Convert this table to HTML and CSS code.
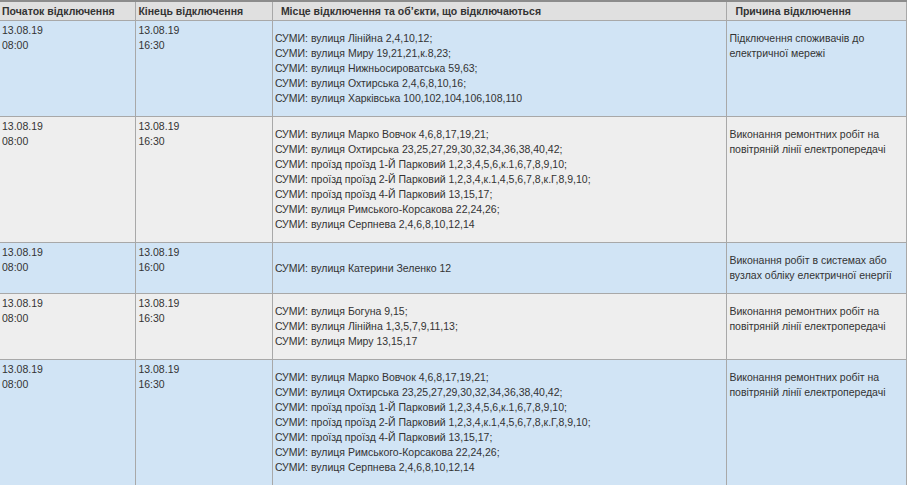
FILE: index.html
```html
<!DOCTYPE html>
<html lang="uk">
<head>
  <meta charset="UTF-8" />
  <title>Графік відключень</title>
  <link rel="stylesheet" href="styles.css">
</head>
<body>

  <table class="outages">
    <thead>
      <tr>
        <th class="col-date">Початок відключення</th>
        <th class="col-date">Кінець відключення</th>
        <th class="col-place wide">Місце відключення та об’єкти, що відключаються</th>
        <th class="col-reason wide">Причина відключення</th>
      </tr>
    </thead>
    <tbody>
      <tr class="odd">
        <td class="date">13.08.19<br>08:00</td>
        <td class="date">13.08.19<br>16:30</td>
        <td class="place">СУМИ: вулиця Лінійна 2,4,10,12;<br>СУМИ: вулиця Миру 19,21,21,к.8,23;<br>СУМИ: вулиця Нижньосироватська 59,63;<br>СУМИ: вулиця Охтирська 2,4,6,8,10,16;<br>СУМИ: вулиця Харківська 100,102,104,106,108,110</td>
        <td class="reason">Підключення споживачів до електричної мережі</td>
      </tr>
      <tr class="even">
        <td class="date">13.08.19<br>08:00</td>
        <td class="date">13.08.19<br>16:30</td>
        <td class="place">СУМИ: вулиця Марко Вовчок 4,6,8,17,19,21;<br>СУМИ: вулиця Охтирська 23,25,27,29,30,32,34,36,38,40,42;<br>СУМИ: проїзд проїзд 1-Й Парковий 1,2,3,4,5,6,к.1,6,7,8,9,10;<br>СУМИ: проїзд проїзд 2-Й Парковий 1,2,3,4,к.1,4,5,6,7,8,к.Г,8,9,10;<br>СУМИ: проїзд проїзд 4-Й Парковий 13,15,17;<br>СУМИ: вулиця Римського-Корсакова 22,24,26;<br>СУМИ: вулиця Серпнева 2,4,6,8,10,12,14</td>
        <td class="reason">Виконання ремонтних робіт на повітряній лінії електропередачі</td>
      </tr>
      <tr class="odd">
        <td class="date">13.08.19<br>08:00</td>
        <td class="date">13.08.19<br>16:00</td>
        <td class="place">СУМИ: вулиця Катерини Зеленко 12</td>
        <td class="reason">Виконання робіт в системах або вузлах обліку електричної енергії</td>
      </tr>
      <tr class="even">
        <td class="date">13.08.19<br>08:00</td>
        <td class="date">13.08.19<br>16:30</td>
        <td class="place">СУМИ: вулиця Богуна 9,15;<br>СУМИ: вулиця Лінійна 1,3,5,7,9,11,13;<br>СУМИ: вулиця Миру 13,15,17</td>
        <td class="reason">Виконання ремонтних робіт на повітряній лінії електропередачі</td>
      </tr>
      <tr class="odd">
        <td class="date">13.08.19<br>08:00</td>
        <td class="date">13.08.19<br>16:30</td>
        <td class="place">СУМИ: вулиця Марко Вовчок 4,6,8,17,19,21;<br>СУМИ: вулиця Охтирська 23,25,27,29,30,32,34,36,38,40,42;<br>СУМИ: проїзд проїзд 1-Й Парковий 1,2,3,4,5,6,к.1,6,7,8,9,10;<br>СУМИ: проїзд проїзд 2-Й Парковий 1,2,3,4,к.1,4,5,6,7,8,к.Г,8,9,10;<br>СУМИ: проїзд проїзд 4-Й Парковий 13,15,17;<br>СУМИ: вулиця Римського-Корсакова 22,24,26;<br>СУМИ: вулиця Серпнева 2,4,6,8,10,12,14</td>
        <td class="reason">Виконання ремонтних робіт на повітряній лінії електропередачі</td>
      </tr>
    </tbody>
  </table>

</body>
</html>
```
FILE: styles.css
```css
body {
  margin: 0;
  background: #fff;
  font-family: 'Liberation Sans', Arial, sans-serif;
  font-size: 10.5px;
  line-height: 15px;
  color: #333;
}

/* table */
.outages {
  width: 908px;
  border-collapse: collapse;
  table-layout: fixed;
  margin-left: -1px;
}
.outages th,
.outages td {
  border: 1px solid #a8a8a8;
  text-align: left;
}
.outages thead tr {
  border-top: 2px solid #8c8c8c;
}
.outages th {
  background: #e0e0e0;
  font-weight: bold;
  padding: 2px 2px 1px 2px;
  color: #333;
}
.outages th.wide {
  padding-left: 8px;
}
.col-date { width: 131px; }
.col-place { width: 442px; }
.col-reason { width: 168px; }

.odd td { background: #d1e4f5; }
.even td { background: #eeeeee; }

td.date {
  vertical-align: top;
  padding: 2px;
}
td.place {
  vertical-align: middle;
  padding: 10px 2px;
}
td.reason {
  vertical-align: top;
  padding: 10px 4px 10px 2px;
}
```
